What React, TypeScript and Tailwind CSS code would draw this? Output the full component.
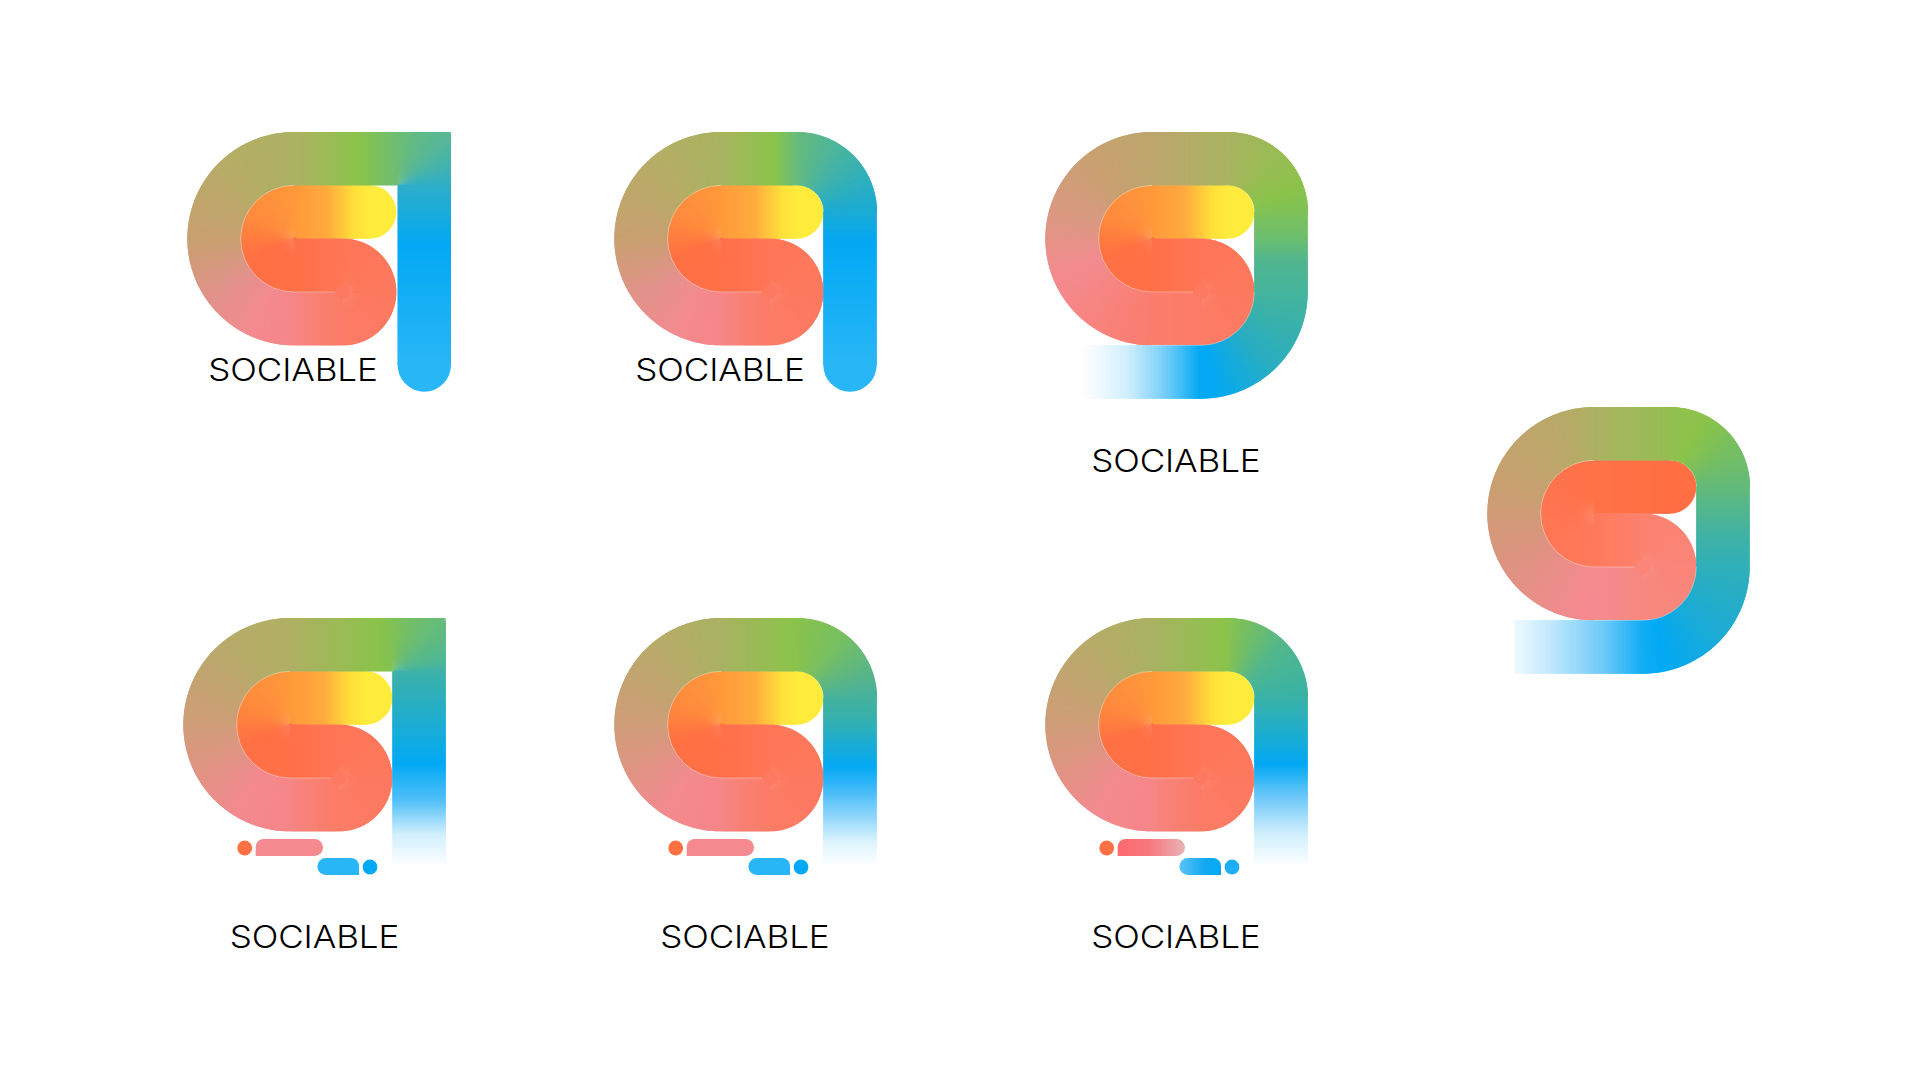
import type { ReactNode } from "react";

// the mark is one 53.33px wide ribbon folded into an S, colour runs along the ribbon
const U = 53.33;
const H = U / 2;
const DEG = Math.PI / 180;

type Seg =
  | { kind: "line"; x0: number; y0: number; x1: number; y1: number }
  | { kind: "arc"; cx: number; cy: number; r: number; a0: number; a1: number }
  | { kind: "corner"; cx: number; cy: number; a0: number; a1: number };
type Stop = [number, string];

const line = (x0: number, y0: number, x1: number, y1: number): Seg => ({ kind: "line", x0, y0, x1, y1 });
const arc = (cx: number, cy: number, r: number, a0: number, a1: number): Seg => ({ kind: "arc", cx, cy, r, a0, a1 });

// segments 0-5 are the same on every logo
const sCurve: Seg[] = [
  line(183, 80, 107, 80),
  arc(107, 106.67, H, 270, 90),
  line(107, 133.33, 156, 133.33),
  arc(156, 160, H, -90, 90),
  line(156, 186.67, 107, 186.67),
  arc(107, 106.67, 80, 90, 270),
];

const squareTail = (px: number, end: number, x = px + H): Seg[] => [
  ...sCurve,
  line(107, H, px, H),
  { kind: "corner", cx: px, cy: U, a0: -90, a1: 0 },
  line(x, U, x, end),
];
const roundTail = (end: number): Seg[] => [...sCurve, line(107, H, 183, H), arc(183, 80, U, -90, 0), line(236, 80, 236, end)];
const ringTail = (end: number): Seg[] => [
  ...sCurve,
  line(107, H, 183, H),
  arc(183, 80, U, -90, 0),
  line(236, 80, 236, 160),
  arc(156, 160, 80, 0, 90),
  line(156, 240, end, 240),
];

const hex = (c: string) => [1, 3, 5].map((i) => parseInt(c.slice(i, i + 2), 16));
const colorAt = (stops: Stop[], k: number) => {
  let i = 0;
  while (i < stops.length - 2 && k > stops[i + 1][0]) i++;
  const [k0, c0] = stops[i];
  const [k1, c1] = stops[i + 1];
  const t = Math.min(1, Math.max(0, (k - k0) / (k1 - k0)));
  const a = hex(c0);
  const b = hex(c1);
  return `rgb(${a.map((v, n) => Math.round(v + (b[n] - v) * t)).join(",")})`;
};

const ribbon = (segs: Seg[], stops: Stop[]) => {
  const rows: { l: number[]; r: number[]; c: string }[] = [];
  segs.forEach((s, k) => {
    if (s.kind === "line") {
      const len = Math.hypot(s.x1 - s.x0, s.y1 - s.y0);
      const n = Math.ceil(len / 2);
      const nx = (s.y1 - s.y0) / len;
      const ny = -(s.x1 - s.x0) / len;
      for (let i = 0; i < n; i++) {
        const t = i / n;
        const x = s.x0 + (s.x1 - s.x0) * t;
        const y = s.y0 + (s.y1 - s.y0) * t;
        rows.push({ l: [x + nx * H, y + ny * H], r: [x - nx * H, y - ny * H], c: colorAt(stops, k + t) });
      }
    } else if (s.kind === "arc") {
      const n = Math.ceil((Math.abs(s.a1 - s.a0) * DEG * (s.r + H)) / 2);
      const sign = s.a1 > s.a0 ? 1 : -1;
      for (let i = 0; i < n; i++) {
        const t = i / n;
        const a = (s.a0 + (s.a1 - s.a0) * t) * DEG;
        // fans with no inner radius cross their pivot a little, else the tip stays pale
        const tight = s.r - H < 1;
        const lr = sign > 0 ? s.r + H : tight ? -1.5 : s.r - H;
        const rr = sign > 0 ? (tight ? -1.5 : s.r - H) : s.r + H;
        rows.push({
          l: [s.cx + Math.cos(a) * lr, s.cy + Math.sin(a) * lr],
          r: [s.cx + Math.cos(a) * rr, s.cy + Math.sin(a) * rr],
          c: colorAt(stops, k + t),
        });
      }
    } else {
      const n = 40;
      for (let i = 0; i < n; i++) {
        const t = i / n;
        const a = (s.a0 + (s.a1 - s.a0) * t) * DEG;
        const d = U / Math.max(Math.abs(Math.cos(a)), Math.abs(Math.sin(a)));
        rows.push({ l: [s.cx + Math.cos(a) * d, s.cy + Math.sin(a) * d], r: [s.cx, s.cy], c: colorAt(stops, k + t) });
      }
    }
  });
  const lastSeg = segs[segs.length - 1];
  if (lastSeg.kind === "line") {
    const len = Math.hypot(lastSeg.x1 - lastSeg.x0, lastSeg.y1 - lastSeg.y0);
    const nx = (lastSeg.y1 - lastSeg.y0) / len;
    const ny = -(lastSeg.x1 - lastSeg.x0) / len;
    rows.push({
      l: [lastSeg.x1 + nx * H, lastSeg.y1 + ny * H],
      r: [lastSeg.x1 - nx * H, lastSeg.y1 - ny * H],
      c: colorAt(stops, segs.length),
    });
  }
  return rows;
};

const Mark = ({ segs, stops, cap, ring, children }: { segs: Seg[]; stops: Stop[]; cap?: [number, number]; ring?: boolean; children?: ReactNode }) => {
  const rows = ribbon(segs, stops);
  return (
    <svg width="264" height="270" viewBox="0 0 264 270" className="block overflow-visible">
      <circle cx="182.67" cy="80" r={H} fill={colorAt(stops, 0)} />
      {cap && <circle cx={cap[0]} cy={cap[1]} r={H} fill={colorAt(stops, segs.length)} />}
      {rows.map((row, i) => {
        const next = rows[Math.min(i + 2, rows.length - 1)];
        if (i === rows.length - 1) return null;
        return <polygon key={i} fill={row.c} points={`${row.l} ${row.r} ${next.r} ${next.l}`} />;
      })}
      {/* hides the pale tip where the lobe's fan meets */}
      <circle cx="156" cy="160" r="7" fill={colorAt(stops, 3.5)} />
      {/* thin light seams between the folds */}
      <path d="M107 53.33A53.33 53.33 0 0 0 107 160L148 160" fill="none" stroke="#fff" strokeOpacity="0.55" strokeWidth="0.6" />
      {ring && <path d="M107 213.33L156 213.33A53.33 53.33 0 0 0 209.33 160" fill="none" stroke="#fff" strokeOpacity="0.5" strokeWidth="0.6" />}
      {children}
    </svg>
  );
};

const Bits = ({ soft }: { soft?: boolean }) => (
  <>
    <defs>
      <linearGradient id="bitPink" x1="0" x2="1" y1="0" y2="0">
        <stop offset="0" stopColor="#fb6a70" />
        <stop offset="0.45" stopColor="#f8767b" />
        <stop offset="1" stopColor="#eab2b6" />
      </linearGradient>
      <linearGradient id="bitBlue" x1="0" x2="1" y1="0" y2="0">
        <stop offset="0" stopColor="#5cc3f8" />
        <stop offset="0.6" stopColor="#12a9f2" />
        <stop offset="1" stopColor="#03a9f4" />
      </linearGradient>
    </defs>
    <circle cx="61.7" cy="230" r="7.4" fill="#ff7043" />
    <path d="M72.7 238V229a8 8 0 0 1 8-8H131.5a8.5 8.5 0 0 1 0 17Z" fill={soft ? "url(#bitPink)" : "#f48a8f"} />
    <path d="M176 257V248a8 8 0 0 0-8-8H142.9a8.5 8.5 0 0 0 0 17Z" fill={soft ? "url(#bitBlue)" : "#29b6f6"} />
    <circle cx="187" cy="249" r="7.4" fill={soft ? "#1eaef4" : "#03a9f4"} />
  </>
);

const Caption = ({ className }: { className: string }) => (
  <p className={`font-['Inter',sans-serif] font-light text-[31px] leading-none tracking-[-0.1px] scale-x-[1.13] text-black text-center whitespace-nowrap ${className}`}>SOCIABLE</p>
);

const warmS: Stop[] = [
  [0, "#ffeb3b"],
  [0.2, "#ffdf3a"],
  [0.55, "#ffaa3c"],
  [1, "#ff983b"],
  [1.35, "#ff8a3d"],
  [1.62, "#ff7043"],
  [2, "#ff7048"],
  [3, "#ff7657"],
  [4, "#fb7c66"],
];

const stopsA: Stop[] = [...warmS, [4.6, "#f98176"], [5, "#f68688"], [5.13, "#f48a8f"], [5.3, "#e2928a"], [5.5, "#c8a070"], [5.8, "#b4ae66"], [6, "#adb162"], [6.61, "#8bc34a"], [7, "#6cbd75"], [7.5, "#56b798"], [8, "#2eaec8"], [8.32, "#03a9f4"], [9, "#29b6f6"]];
const stopsB: Stop[] = [...warmS, [4.6, "#f98176"], [5, "#f68688"], [5.13, "#f48a8f"], [5.3, "#e2928a"], [5.5, "#c8a070"], [5.8, "#b4ae66"], [6, "#a8b35f"], [6.68, "#8bc34a"], [7, "#66bb7d"], [7.5, "#3fb2ab"], [8, "#19aad6"], [8.2, "#03a9f4"], [9, "#29b6f6"]];
const stopsC: Stop[] = [...warmS, [5, "#fb7d6e"], [5.37, "#f48a8f"], [5.6, "#d89a80"], [5.8, "#c8a070"], [6, "#bda66c"], [7, "#a9b360"], [7.8, "#8bc34a"], [8.3, "#6cbe6d"], [8.6, "#4fb58f"], [9, "#45b49c"], [9.5, "#2aadc0"], [9.92, "#03a9f4"], [10, "#03a9f4"], [10.31, "#7dd0fa"], [10.59, "#cdeefd"], [10.87, "#f5fbff"], [11, "#ffffff"]];
const stopsD: Stop[] = [[0, "#ff6f43"], [1, "#ff7147"], [2, "#ff7a5c"], [3, "#fc8270"], [4, "#f78880"], [4.9, "#f48a8f"], [5.05, "#f48a8f"], [5.35, "#dc9480"], [5.6, "#c8a070"], [5.9, "#b8aa68"], [6, "#acb162"], [7, "#93bf50"], [7.3, "#8bc34a"], [8, "#62ba7a"], [8.6, "#3fb2a5"], [9, "#2fafba"], [9.5, "#1aabd8"], [9.85, "#03a9f4"], [10, "#12adf5"], [10.3, "#6ec9f9"], [10.7, "#bfe8fc"], [11, "#f0faff"]];
const stopsE: Stop[] = [...warmS, [4.6, "#f98176"], [5, "#f68688"], [5.18, "#f38a8f"], [5.5, "#cf9d78"], [5.8, "#b7ab69"], [6, "#afb063"], [6.85, "#8bc34a"], [7.15, "#77bf62"], [7.5, "#64bb7c"], [7.85, "#4fb795"], [8.05, "#36b0b0"], [8.47, "#03a9f4"], [8.66, "#52c0f8"], [8.83, "#cfeefd"], [9, "#ffffff"]];
const stopsF: Stop[] = [...warmS, [4.6, "#f98176"], [5, "#f68688"], [5.18, "#f38a8f"], [5.5, "#cf9d78"], [5.8, "#b7ab69"], [6, "#a9b262"], [6.95, "#8bc34a"], [7.5, "#52b78c"], [8, "#38b2a8"], [8.39, "#03a9f4"], [8.55, "#5cc2f8"], [8.8, "#cfeefd"], [9, "#ffffff"]];
const stopsG: Stop[] = [...warmS, [4.6, "#f98176"], [5, "#f68688"], [5.18, "#f38a8f"], [5.5, "#cf9d78"], [5.8, "#b7ab69"], [6, "#a9b262"], [6.95, "#8bc34a"], [7.4, "#77bf62"], [7.9, "#4fb295"], [8.1, "#38b1a9"], [8.4, "#03a9f4"], [8.53, "#3cb8f8"], [8.7, "#8fd6fb"], [8.85, "#dcf3fd"], [9, "#ffffff"]];

const App = () => {
  return (
    <div className="flex h-screen w-full overflow-hidden bg-white">
      <div className="flex flex-col">
        {/* top row */}
        <div className="flex h-[618.3px] pt-[131.7px]">
          <div className="relative ml-[187px] w-[264px]">
            <Mark segs={squareTail(210.67, 233)} stops={stopsA} cap={[237.33, 233]} />
            <Caption className="absolute left-0 top-[222px] w-[212px]" />
          </div>
          <div className="relative ml-[163px] w-[264px]">
            <Mark segs={roundTail(233)} stops={stopsB} cap={[236, 233]} />
            <Caption className="absolute left-0 top-[222px] w-[212px]" />
          </div>
          <div className="ml-[167px] w-[264px]">
            <Mark segs={ringTail(35)} stops={stopsC} ring />
            <Caption className="mt-[43px] pr-[2px]" />
          </div>
        </div>
        {/* bottom row */}
        <div className="flex">
          <div className="ml-[183.3px] w-[264px]">
            <Mark segs={squareTail(209.4, 248)} stops={stopsE}>
              <Bits />
            </Mark>
            <Caption className="mt-[33px] pr-[1px]" />
          </div>
          <div className="ml-[166.7px] w-[264px]">
            <Mark segs={roundTail(248)} stops={stopsG}>
              <Bits />
            </Mark>
            <Caption className="mt-[33px] pr-[2px]" />
          </div>
          <div className="ml-[167px] w-[264px]">
            <Mark segs={roundTail(248)} stops={stopsF}>
              <Bits soft />
            </Mark>
            <Caption className="mt-[33px] pr-[2px]" />
          </div>
        </div>
      </div>
      {/* lone mark on the right */}
      <div className="ml-[178px] pt-[406.7px]">
        <Mark segs={ringTail(27)} stops={stopsD} ring />
      </div>
    </div>
  );
};

export default App;
